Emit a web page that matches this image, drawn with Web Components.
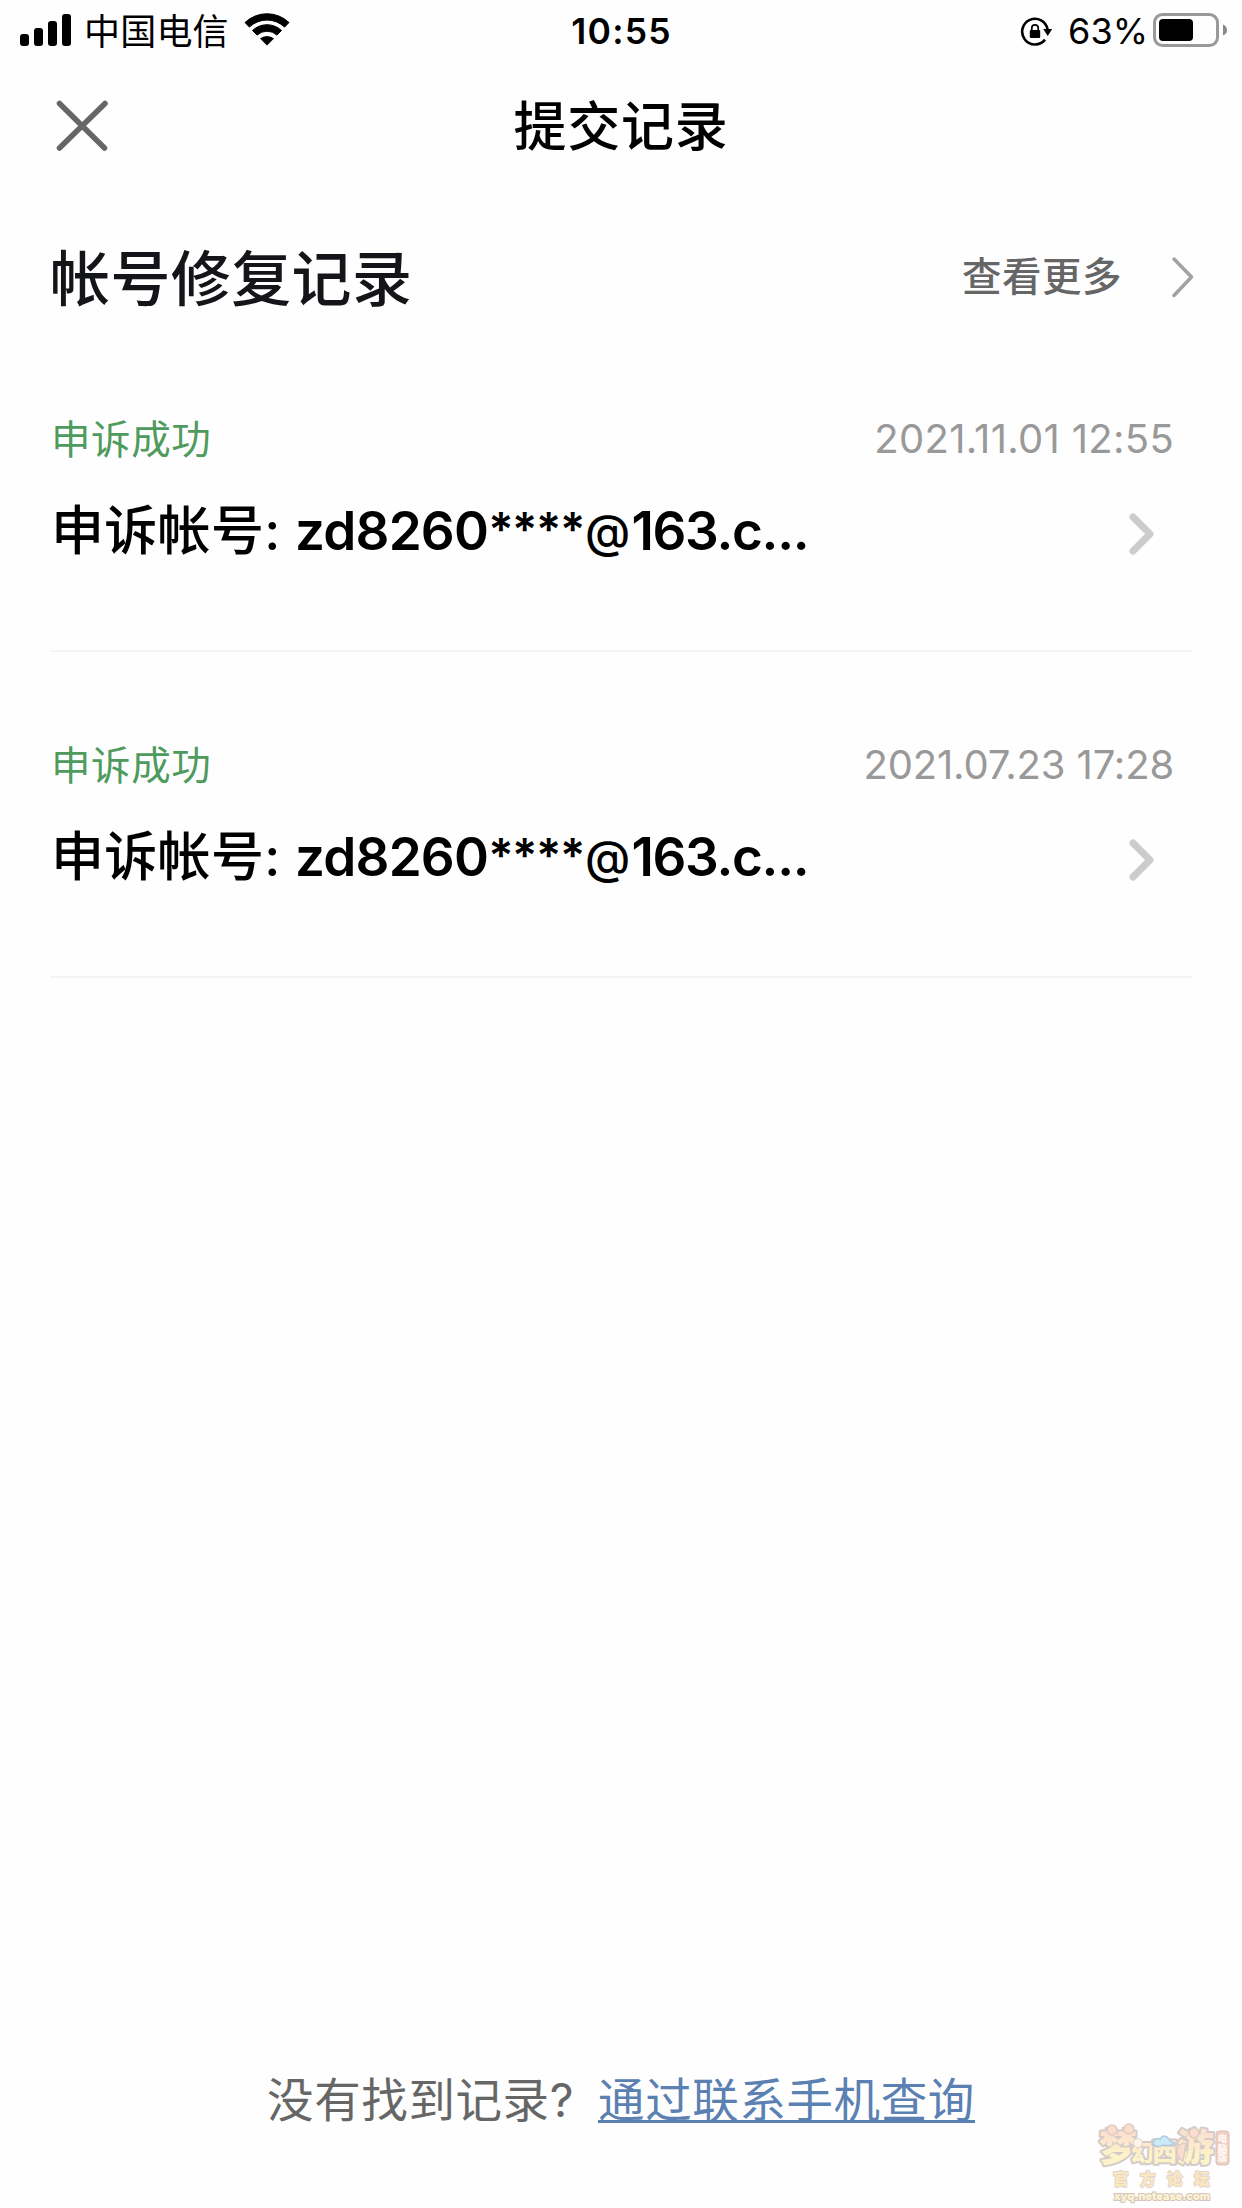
<!DOCTYPE html>
<html lang="zh-CN">
<head>
<meta charset="utf-8">
<title>提交记录</title>
<style>
  html, body {
    margin: 0;
    padding: 0;
    background: #fefefe;
  }
  body {
    font-family: Inter, "Noto Sans CJK SC", sans-serif;
    color: #000;
  }
</style>
</head>
<body>
<records-page>
  <status-bar slot="top" data-carrier="中国电信" data-time="10:55" data-battery="63%"></status-bar>
  <nav-header slot="top">提交记录</nav-header>
  <section-title data-more="查看更多">帐号修复记录</section-title>
  <record-item data-status="申诉成功" data-date="2021.11.01 12:55" data-spacing="0.3" data-account="zd8260****@163.c...">申诉帐号</record-item>
  <record-item data-status="申诉成功" data-date="2021.07.23 17:28" data-spacing="-0.15" data-account="zd8260****@163.c...">申诉帐号</record-item>
  <page-footer slot="bottom" data-link="通过联系手机查询">没有找到记录?</page-footer>
</records-page>

<script>
class RecordsPage extends HTMLElement {
  constructor() {
    super();
    this.attachShadow({ mode: "open" }).innerHTML = `
      <style>
        :host {
          display: flex;
          flex-direction: column;
          position: relative;
          width: 1242px;
          height: 2208px;
          overflow: hidden;
        }
        main {
          flex: 1;
          padding: 0 50px;
        }
        forum-mark {
          position: absolute;
          right: 0;
          bottom: 0;
        }
      </style>
      <slot name="top"></slot>
      <main><slot></slot></main>
      <slot name="bottom"></slot>
      <forum-mark></forum-mark>
    `;
  }
}

class StatusBar extends HTMLElement {
  connectedCallback() {
    this.attachShadow({ mode: "open" }).innerHTML = `
      <style>
        :host {
          display: grid;
          grid-template-columns: 1fr auto 1fr;
          align-items: center;
          height: 62px;
          padding: 0 15px 0 20px;
          font-size: 36px;
          line-height: 60px;
          white-space: nowrap;
        }
        div {
          display: flex;
          align-items: center;
        }
        svg {
          display: block;
          flex: none;
        }
        .carrier {
          margin: 0 15px 0 13px;
          padding-top: 2px;
          letter-spacing: 0.2px;
        }
        .time {
          padding: 2px 4px 0 0;
          font-size: 35.5px;
          font-weight: 570;
          letter-spacing: 1.2px;
        }
        .right { justify-content: flex-end; }
        .battery { margin: 0 5px 0 15px; }
      </style>
      <div class="left">
        <svg width="51" height="62" viewBox="0 0 51 62">
          <rect x="0" y="34" width="9" height="12" rx="3"/>
          <rect x="14" y="28" width="9" height="18" rx="3"/>
          <rect x="28" y="21" width="9" height="25" rx="3"/>
          <rect x="42" y="14" width="9" height="32" rx="3"/>
        </svg>
        <span class="carrier">${this.dataset.carrier}</span>
        <svg width="46" height="62" viewBox="0 0 46 62">
          <path d="M1 22.5a32 32 0 0 1 44 0l-4.4 4.6a25.5 25.5 0 0 0-35.2 0z" stroke="#000" stroke-linejoin="round"/>
          <path d="M8.5 30.5a21 21 0 0 1 29 0l-4.6 4.6a14.5 14.5 0 0 0-19.8 0z" stroke="#000" stroke-linejoin="round"/>
          <path d="M16 38.6a10.5 10.5 0 0 1 14 0l-7 7z"/>
        </svg>
      </div>
      <span class="time">${this.dataset.time}</span>
      <div class="right">
        <svg width="33" height="62" viewBox="0 0 33 62">
          <path d="M27.6 29.5A12.8 12.8 0 1 0 25 39.6" fill="none" stroke="#000" stroke-width="2.6"/>
          <path d="M23.2 29h9l-4.5 7z"/>
          <rect x="9.8" y="30" width="10.4" height="8" rx="1"/>
          <path d="M11.8 30v-2a3.2 3.2 0 0 1 6.4 0v2" fill="none" stroke="#000" stroke-width="1.7"/>
        </svg>
        <span class="battery">${this.dataset.battery}</span>
        <svg width="74" height="62" viewBox="0 0 74 62">
          <rect x="1.5" y="14.5" width="63" height="31" rx="8" fill="none" stroke="#999" stroke-width="3"/>
          <rect x="6" y="19" width="34" height="22" rx="4"/>
          <path d="M70 24.5q4 1.5 4 5.5t-4 5.5z" fill="#888"/>
        </svg>
      </div>
    `;
  }
}

class NavHeader extends HTMLElement {
  constructor() {
    super();
    this.attachShadow({ mode: "open" }).innerHTML = `
      <style>
        :host {
          display: grid;
          grid-template-columns: 1fr auto 1fr;
          align-items: center;
          height: 126px;
          padding: 0 54px;
          font-size: 53px;
          font-weight: 500;
          line-height: 122px;
          letter-spacing: 0.8px;
        }
        svg { display: block; }
        span { padding-top: 4px; }
      </style>
      <svg width="56" height="126" viewBox="0 0 56 126">
        <path d="M5.5 41.5L50.5 86M51 41.5L5.5 86" stroke="#666" stroke-width="5.5" stroke-linecap="round"/>
      </svg>
      <span><slot></slot></span>
    `;
  }
}

class SectionTitle extends HTMLElement {
  connectedCallback() {
    this.attachShadow({ mode: "open" }).innerHTML = `
      <style>
        :host {
          display: flex;
          align-items: center;
          height: 176px;
          margin-right: -3px;
          line-height: 170px;
          font-size: 60px;
          font-weight: 500;
          letter-spacing: 0.4px;
          color: #141518;
        }
        .title { padding-top: 6px; }
        .more {
          margin-left: auto;
          padding-top: 1px;
          font-size: 39.5px;
          letter-spacing: 0.5px;
          color: #666;
        }
        svg { margin: 2px 0 0 47px; }
      </style>
      <span class="title"><slot></slot></span>
      <span class="more">${this.dataset.more}</span>
      <svg width="26" height="46" viewBox="0 0 26 46">
        <path d="M5 5L22.5 23L5 41.5" fill="none" stroke="#a2a2a2" stroke-width="3.5" stroke-linecap="round" stroke-linejoin="round"/>
      </svg>
    `;
  }
}

class RecordItem extends HTMLElement {
  connectedCallback() {
    const [, name, stars, domain] = this.dataset.account.match(/^([^*]*)(\**)@(.*)$/);
    this.attachShadow({ mode: "open" }).innerHTML = `
      <style>
        :host {
          display: block;
          box-sizing: border-box;
          height: 288px;
          margin-bottom: 38px;
          padding: 44px 18px 0 1px;
          border-bottom: 2px solid #f5f5f5;
        }
        .row {
          display: flex;
          align-items: center;
          justify-content: space-between;
          height: 62px;
          line-height: 62px;
          font-size: 39.5px;
        }
        .status {
          padding-top: 1px;
          color: #4f9a5d;
          letter-spacing: 0.6px;
        }
        .date {
          font-size: 40px;
          color: #999;
          letter-spacing: ${this.dataset.spacing}px;
        }
        .account {
          height: 120px;
          line-height: 120px;
          padding-right: 18px;
          font-size: 53px;
          font-weight: 500;
          letter-spacing: 0.3px;
        }
        .account > span { padding-top: 1px; }
        .account b {
          font-weight: 560;
          letter-spacing: -0.8px;
        }
        /* small and tight, so that the masked part stays short */
        .account .stars {
          font-size: 47px;
          line-height: 1;
          letter-spacing: -1.4px;
          vertical-align: 4px;
        }
        .account .at {
          margin: 0 2px 0 1px;
          font-size: 46px;
          font-weight: 500;
          line-height: 1;
          vertical-align: 2px;
        }
        .account .domain { letter-spacing: -1.3px; }
        .account svg { margin-top: 8px; }
      </style>
      <div class="row">
        <span class="status">${this.dataset.status}</span>
        <span class="date">${this.dataset.date}</span>
      </div>
      <div class="row account">
        <span><slot></slot>: <b>${name}</b><b class="stars">${stars}</b><b class="at">@</b><b class="domain">${domain}</b></span>
        <svg width="28" height="44" viewBox="0 0 28 44">
          <path d="M5 5L22 22L5 39" fill="none" stroke="#ccc" stroke-width="7" stroke-linecap="round" stroke-linejoin="round"/>
        </svg>
      </div>
    `;
  }
}

class PageFooter extends HTMLElement {
  connectedCallback() {
    this.attachShadow({ mode: "open" }).innerHTML = `
      <style>
        :host {
          display: flex;
          justify-content: center;
          gap: 24px;
          height: 138px;
          line-height: 60px;
          font-size: 46.5px;
          letter-spacing: 0.6px;
          color: #666;
        }
        a {
          height: 50px;
          border-bottom: 3px solid #5b80b2;
          color: #5b80b2;
        }
      </style>
      <slot></slot>
      <a>${this.dataset.link}</a>
    `;
  }
}

// Pale forum logo that lies over the bottom right corner
class ForumMark extends HTMLElement {
  constructor() {
    super();
    this.attachShadow({ mode: "open" }).innerHTML = `
      <style>
        :host { display: block; }
        svg {
          display: block;
          opacity: 0.85;
        }
        text {
          font-family: "Noto Sans CJK SC", sans-serif;
          font-weight: 900;
          paint-order: stroke;
          stroke-linejoin: round;
        }
        .logo {
          fill: url(#warm);
          stroke: #cdc3bf;
          stroke-width: 4px;
        }
        .forum {
          font-size: 15.5px;
          letter-spacing: 11.5px;
          fill: #fbe3b4;
          stroke: #dccfc8;
          stroke-width: 2px;
        }
        .edition {
          font-size: 9.5px;
          fill: #fff8f2;
          writing-mode: vertical-rl;
        }
        .site {
          font-family: Inter, sans-serif;
          font-size: 11px;
          fill: #fdf2cb;
          stroke: #cdb9ae;
          stroke-width: 2px;
        }
      </style>
      <svg width="162" height="98" viewBox="0 0 162 98">
        <defs>
          <linearGradient id="warm" x1="0" y1="0" x2="0" y2="1">
            <stop offset="0.3" stop-color="#fcdcc6"/>
            <stop offset="0.7" stop-color="#fdf2c0"/>
          </linearGradient>
        </defs>
        <text class="logo" y="51"><tspan x="19" font-size="38">梦</tspan><tspan x="51" font-size="23">幻</tspan><tspan x="72" font-size="25">西</tspan><tspan x="97" font-size="37">游</tspan></text>
        <g fill="#fbd8c6" stroke="#d8c2ba" stroke-width="1.5">
          <circle cx="32" cy="20" r="5"/>
          <circle cx="49" cy="19" r="5"/>
          <circle cx="114" cy="23" r="5"/>
          <path d="M97 40q4-9 9-6l-3 17q-6-3-6-11z"/>
        </g>
        <circle cx="58" cy="33" r="4.5" fill="#fff3e4" stroke="#e0cdbf"/>
        <path d="M73 34q1-7 7-5 4-6 9 0 1 3 6 4-5 4-12 2-6 4-10-1z" fill="#c4e6f6" stroke="#9fc3d8" stroke-width="1.5"/>
        <rect x="136" y="21" width="13" height="34" rx="3" fill="#eec8bb" stroke="#d3b5aa"/>
        <text class="edition" x="142.5" y="24">电脑版</text>
        <text class="forum" x="33" y="74.5">官方论坛</text>
        <text class="site" x="34" y="90" textLength="96" lengthAdjust="spacingAndGlyphs">xyq.netease.com</text>
      </svg>
    `;
  }
}

customElements.define("forum-mark", ForumMark);
customElements.define("records-page", RecordsPage);
customElements.define("status-bar", StatusBar);
customElements.define("nav-header", NavHeader);
customElements.define("section-title", SectionTitle);
customElements.define("record-item", RecordItem);
customElements.define("page-footer", PageFooter);
</script>
</body>
</html>
